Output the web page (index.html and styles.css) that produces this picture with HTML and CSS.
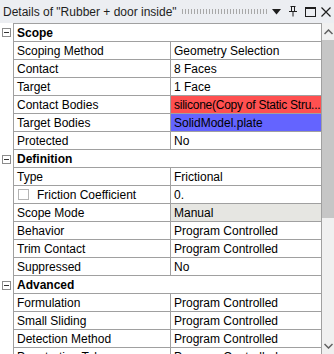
FILE: index.html
```html
<!DOCTYPE html>
<html lang="en">
<head>
    <meta charset="UTF-8">
    <title>Details</title>
    <link rel="stylesheet" href="styles.css">
</head>
<body>
    <div class="panel">
        <!-- Title bar -->
        <div class="titlebar">
            <span class="title">Details of "Rubber + door inside"</span>
            <span class="grip"></span>
            <svg class="tb-icon" width="9" height="6" viewBox="0 0 9 6"><path d="M0 0h9L4.5 5.5z" fill="#1e1e1e"/></svg>
            <svg class="tb-icon pin" width="8" height="11" viewBox="0 0 8 11"><path d="M1.5 0.5h5M2.5 0.5v5M5.5 0.5v5M0 5.5h8M4 5.5v5" stroke="#1e1e1e" stroke-width="1" fill="none"/></svg>
            <svg class="tb-icon" width="11" height="10" viewBox="0 0 11 10"><rect x="0.5" y="0.5" width="10" height="9" stroke="#1e1e1e" fill="none"/><path d="M0 1.5h11" stroke="#1e1e1e"/></svg>
            <svg class="tb-icon" width="10" height="10" viewBox="0 0 10 10"><path d="M0.5 0.5l9 9M9.5 0.5l-9 9" stroke="#1e1e1e" stroke-width="1.2"/></svg>
        </div>

        <div class="body">
            <div class="grid">
                <div class="row section"><div class="gutter"><span class="expander"></span></div><div class="cells"><div class="name">Scope</div></div></div>
                <div class="row"><div class="gutter"></div><div class="cells"><div class="name">Scoping Method</div><div class="value">Geometry Selection</div></div></div>
                <div class="row"><div class="gutter"></div><div class="cells"><div class="name">Contact</div><div class="value">8 Faces</div></div></div>
                <div class="row"><div class="gutter"></div><div class="cells"><div class="name">Target</div><div class="value">1 Face</div></div></div>
                <div class="row"><div class="gutter"></div><div class="cells"><div class="name">Contact Bodies</div><div class="value red">silicone(Copy of Static Stru...</div></div></div>
                <div class="row"><div class="gutter"></div><div class="cells"><div class="name">Target Bodies</div><div class="value blue">SolidModel.plate</div></div></div>
                <div class="row"><div class="gutter"></div><div class="cells"><div class="name">Protected</div><div class="value">No</div></div></div>

                <div class="row section"><div class="gutter"><span class="expander"></span></div><div class="cells"><div class="name">Definition</div></div></div>
                <div class="row"><div class="gutter"></div><div class="cells"><div class="name">Type</div><div class="value">Frictional</div></div></div>
                <div class="row"><div class="gutter"></div><div class="cells"><div class="name"><span class="check"></span>Friction Coefficient</div><div class="value">0.</div></div></div>
                <div class="row"><div class="gutter"></div><div class="cells"><div class="name">Scope Mode</div><div class="value grey">Manual</div></div></div>
                <div class="row"><div class="gutter"></div><div class="cells"><div class="name">Behavior</div><div class="value">Program Controlled</div></div></div>
                <div class="row"><div class="gutter"></div><div class="cells"><div class="name">Trim Contact</div><div class="value">Program Controlled</div></div></div>
                <div class="row"><div class="gutter"></div><div class="cells"><div class="name">Suppressed</div><div class="value">No</div></div></div>

                <div class="row section"><div class="gutter"><span class="expander"></span></div><div class="cells"><div class="name">Advanced</div></div></div>
                <div class="row"><div class="gutter"></div><div class="cells"><div class="name">Formulation</div><div class="value">Program Controlled</div></div></div>
                <div class="row"><div class="gutter"></div><div class="cells"><div class="name">Small Sliding</div><div class="value">Program Controlled</div></div></div>
                <div class="row"><div class="gutter"></div><div class="cells"><div class="name">Detection Method</div><div class="value">Program Controlled</div></div></div>
                <div class="row"><div class="gutter"></div><div class="cells"><div class="name">Penetration Tolerance</div><div class="value">Program Controlled</div></div></div>
            </div>

            <!-- Scrollbar -->
            <div class="scrollbar">
                <svg class="arrow" width="9" height="6" viewBox="0 0 9 6"><path d="M0.5 5L4.5 1L8.5 5" stroke="#606060" stroke-width="1.5" fill="none"/></svg>
                <div class="thumb"></div>
                <div class="track"></div>
                <svg class="arrow" width="9" height="6" viewBox="0 0 9 6"><path d="M0.5 1L4.5 5L8.5 1" stroke="#606060" stroke-width="1.5" fill="none"/></svg>
            </div>
        </div>
    </div>
</body>
</html>
```

FILE: styles.css
```css
* {
    margin: 0;
    padding: 0;
    box-sizing: border-box;
}
:root {
    --grid-line: #a0a0a0;
    --title-bg: #eceef2;
    --text: #000000;
}
body {
    font-family: 'Liberation Sans', Arial, sans-serif;
    font-size: 12px;
    color: var(--text);
    background: #ffffff;
}
.panel {
    width: 334px;
    height: 354px;
    overflow: hidden;
    display: flex;
    flex-direction: column;
}
/* Title bar */
.titlebar {
    height: 23px;
    flex: none;
    display: flex;
    align-items: center;
    padding-left: 3px;
    background: var(--title-bg);
    color: #1e1e1e;
}
.title {
    white-space: nowrap;
}
.grip {
    width: 86px;
    height: 5px;
    margin-left: 4px;
    background-image: radial-gradient(circle, #a8a8a8 0.5px, transparent 0.6px);
    background-size: 3px 2px;
}
.tb-icon {
    margin-left: 5px;
    flex: none;
}
.tb-icon.pin {
    margin-left: 8px;
    margin-right: 3px;
}
/* Property grid */
.body {
    flex: 1;
    display: flex;
    min-height: 0;
}
.grid {
    width: 322px;
    flex: none;
}
.row {
    display: flex;
    height: 18px;
}
.row:first-child {
    height: 19px;
}
.row:first-child .cells {
    border-top: 1px solid var(--grid-line);
}
.gutter {
    width: 13px;
    flex: none;
    display: flex;
    align-items: center;
    padding-left: 2px;
}
.expander {
    width: 9px;
    height: 9px;
    border: 1px solid #8c8c8c;
    position: relative;
    background: #fff;
}
.expander::after {
    content: "";
    position: absolute;
    left: 1px;
    top: 3px;
    width: 5px;
    height: 1px;
    background: #333;
}
.cells {
    flex: 1;
    display: flex;
    border-left: 1px solid var(--grid-line);
    border-right: 1px solid var(--grid-line);
    border-bottom: 1px solid var(--grid-line);
}
.name {
    width: 157px;
    flex: none;
    padding-left: 3px;
    border-right: 1px solid var(--grid-line);
    display: flex;
    align-items: center;
    white-space: nowrap;
    overflow: hidden;
}
.section .name {
    font-weight: bold;
    border-right: none;
}
.value {
    flex: 1;
    padding-left: 3px;
    display: flex;
    align-items: center;
    white-space: nowrap;
    overflow: hidden;
}
.value.red {
    background: #ff5050;
    letter-spacing: -0.25px;
}
.value.blue {
    background: #6464ff;
}
.value.grey {
    background: #e6e6e2;
}
.check {
    width: 11px;
    height: 11px;
    border: 1px solid #b4b4b4;
    margin-left: 1px;
    margin-right: 8px;
    background: #fff;
}
/* Scrollbar */
.scrollbar {
    width: 12px;
    flex: none;
    background: #f0f0f0;
    display: flex;
    flex-direction: column;
    align-items: center;
}
.scrollbar .arrow {
    flex: none;
    margin: 6px 0 5px;
}
.thumb {
    width: 12px;
    height: 178px;
    background: #c6c6c6;
    flex: none;
}
.track {
    flex: 1;
}
```
